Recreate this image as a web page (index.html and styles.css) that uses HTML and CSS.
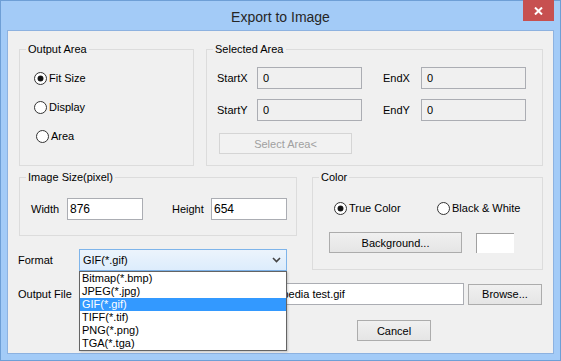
FILE: index.html
```html
<!DOCTYPE html>
<html lang="en">

<head>
    <meta charset="UTF-8">
    <meta name="viewport" content="width=device-width, initial-scale=1.0">
    <title>Export to Image</title>
    <link rel="stylesheet" href="styles.css">
</head>

<body>
    <div class="window">
        <div class="titlebar">
            <span></span>
            <span class="title">Export to Image</span>
            <span class="close">
                <svg width="9" height="8" viewBox="0 0 9 8">
                    <path d="M1 0.5 L8 7.5 M8 0.5 L1 7.5" stroke="#fff" stroke-width="2" fill="none" />
                </svg>
            </span>
        </div>

        <div class="client">
            <!-- 上面两组 -->
            <div class="row-top">
                <fieldset class="group output-area">
                    <legend>Output Area</legend>
                    <div class="output-body">
                        <label class="radio checked"><span class="mark"></span>Fit Size</label>
                        <label class="radio"><span class="mark"></span>Display</label>
                        <label class="radio area"><span class="mark"></span>Area</label>
                    </div>
                </fieldset>

                <fieldset class="group selected-area">
                    <legend>Selected Area</legend>
                    <div class="selected-body">
                        <div class="coords">
                            <span>StartX</span>
                            <input class="field grey" type="text" value="0" readonly>
                            <span class="end-label">EndX</span>
                            <input class="field grey" type="text" value="0" readonly>
                            <span>StartY</span>
                            <input class="field grey" type="text" value="0" readonly>
                            <span class="end-label">EndY</span>
                            <input class="field grey" type="text" value="0" readonly>
                        </div>
                        <button class="btn select-btn" disabled>Select Area&lt;</button>
                    </div>
                </fieldset>
            </div>

            <!-- 中间: 尺寸 / 格式 / 颜色 -->
            <div class="row-mid">
                <div class="left-col">
                    <fieldset class="group image-size">
                        <legend>Image Size(pixel)</legend>
                        <div class="size-body">
                            <span class="w-label">Width</span>
                            <input class="field size" type="text" value="876" readonly>
                            <span class="h-label">Height</span>
                            <input class="field size" type="text" value="654" readonly>
                        </div>
                    </fieldset>

                    <div class="form-row format-row">
                        <span class="label">Format</span>
                        <div class="combo">
                            <span>GIF(*.gif)</span>
                            <svg width="9" height="6" viewBox="0 0 9 6">
                                <path d="M1 1 L4.5 4.5 L8 1" stroke="#444" stroke-width="1.6" fill="none" />
                            </svg>
                            <ul class="dropdown">
                                <li>Bitmap(*.bmp)</li>
                                <li>JPEG(*.jpg)</li>
                                <li class="active">GIF(*.gif)</li>
                                <li>TIFF(*.tif)</li>
                                <li>PNG(*.png)</li>
                                <li>TGA(*.tga)</li>
                            </ul>
                        </div>
                    </div>
                </div>

                <fieldset class="group color">
                    <legend>Color</legend>
                    <div class="color-body">
                        <div class="color-modes">
                            <label class="radio checked true-color"><span class="mark"></span>True Color</label>
                            <label class="radio"><span class="mark"></span>Black &amp; White</label>
                        </div>
                        <div class="bg-row">
                            <button class="btn bg-btn">Background...</button>
                            <span class="swatch"></span>
                        </div>
                    </div>
                </fieldset>
            </div>

            <div class="form-row file-row">
                <span class="label">Output File</span>
                <input class="field file" type="text" value="C:\Users\Softpedia\Desktop\Images\Softpedia test.gif" readonly>
                <button class="btn browse-btn">Browse...</button>
            </div>

            <div class="actions">
                <button class="btn cancel-btn">Cancel</button>
            </div>
        </div>
    </div>
</body>

</html>
```

FILE: styles.css
```css
* {
    margin: 0;
    padding: 0;
    box-sizing: border-box;
}

ul {
    list-style: none;
}

body {
    width: 561px;
    height: 361px;
    overflow: hidden;
    font-family: "Liberation Sans", Arial, sans-serif;
    font-size: 11px;
    color: #000;
}

/* 窗口外框 */
.window {
    width: 561px;
    height: 361px;
    border: 1px solid #6e9fd6;
    background: #a3cbf7;
    padding: 0 6px 6px 6px;
    display: flex;
    flex-direction: column;
}

.titlebar {
    height: 29px;
    display: grid;
    grid-template-columns: 1fr auto 1fr;
    align-items: start;
}

.title {
    font-size: 14px;
    line-height: 16px;
    padding-top: 8px;
    color: #262626;
}

.close {
    justify-self: end;
    width: 31px;
    height: 21px;
    margin-top: -1px;
    background: #c75050;
    display: flex;
    align-items: center;
    justify-content: center;
}

.client {
    flex: 1;
    border: 1px solid #8db2e0;
    background: #f0f0f0;
    padding: 12px 0 0 10px;
}

/* 分组框 */
.group {
    border: 1px solid #dcdcdc;
    min-width: 0;
}

.group legend {
    margin-left: 6px;
    padding: 0 2px;
    line-height: 13px;
}

.row-top {
    display: flex;
    gap: 12px;
    padding-left: 1px;
}

.output-area {
    width: 175px;
    height: 123px;
}

.output-body {
    padding: 16px 0 0 14px;
    display: flex;
    flex-direction: column;
    gap: 16px;
}

.radio {
    display: flex;
    align-items: center;
    gap: 2px;
    height: 13px;
    line-height: 13px;
}

.radio .mark {
    width: 13px;
    height: 13px;
    border: 1px solid #333;
    border-radius: 50%;
    background: #fff;
    display: flex;
    align-items: center;
    justify-content: center;
}

.radio.checked .mark::after {
    content: "";
    width: 5px;
    height: 5px;
    border-radius: 50%;
    background: #111;
    box-shadow: 0 0 0 0.5px #333;
}

.radio.area {
    margin-left: 2px;
}

.selected-area {
    width: 337px;
    height: 123px;
}

.selected-body {
    padding: 11px 0 0 10px;
}

.coords {
    display: grid;
    grid-template-columns: 40px 126px 38px 105px;
    grid-template-rows: 22px 22px;
    row-gap: 10px;
    align-items: center;
}

.field {
    font-family: inherit;
    font-size: 11px;
    height: 22px;
    border: 1px solid #abadb3;
    background: #fff;
    color: #000;
    padding: 0 2px;
    outline: none;
}

.coords .field {
    width: 105px;
}

.field.grey {
    background: #f0f0f0;
    padding-left: 5px;
}

.btn {
    font-family: inherit;
    font-size: 11px;
    color: #000;
    border: 1px solid #acacac;
    background: linear-gradient(#f0f0f0, #e5e5e5);
    height: 21px;
}

.btn:disabled {
    color: #a0a0a0;
    border-color: #d5d5d5;
    background: #f2f2f2;
}

.select-btn {
    width: 133px;
    margin: 12px 0 0 2px;
}

.row-mid {
    display: grid;
    grid-template-columns: 279px 231px;
    column-gap: 15px;
    margin-top: 5px;
    align-items: start;
}

.image-size {
    width: 278px;
    height: 65px;
    margin-left: 1px;
}

.size-body {
    padding: 14px 0 0 11px;
    display: flex;
    align-items: center;
}

.w-label {
    width: 36px;
}

.h-label {
    width: 39px;
    margin-left: 29px;
}

.field.size {
    width: 76px;
    font-size: 12px;
}

.form-row {
    display: flex;
    align-items: center;
}

.form-row .label {
    width: 61px;
}

.format-row {
    margin-top: 13px;
}

/* 下拉框 */
.combo {
    position: relative;
    width: 208px;
    height: 22px;
    border: 1px solid #7eb4ea;
    background: linear-gradient(#ecf4fc, #dcecfc);
    padding: 0 5px 0 3px;
    display: flex;
    align-items: center;
    justify-content: space-between;
}

.dropdown {
    position: absolute;
    top: calc(100% + 1px);
    left: -1px;
    width: 208px;
    height: 80px;
    border: 1px solid #646464;
    background: #fff;
    box-shadow: 1px 1px 2px rgba(0, 0, 0, 0.18);
    z-index: 10;
}

.dropdown li {
    height: 13px;
    line-height: 13px;
    padding-left: 2px;
}

.dropdown .active {
    background: #3399ff;
    color: #fff;
}

.color {
    width: 231px;
    height: 99px;
}

.color-body {
    padding: 18px 0 0 16px;
}

.color-modes {
    display: flex;
    margin-left: 5px;
}

.true-color {
    width: 103px;
}

.bg-row {
    display: flex;
    align-items: flex-start;
    gap: 14px;
    margin-top: 17px;
}

.bg-btn {
    width: 133px;
}

.swatch {
    width: 38px;
    height: 20px;
    margin-top: 1px;
    background: #fff;
    border-top: 1px solid #a0a0a0;
    border-left: 1px solid #a0a0a0;
}

.file-row {
    margin-top: 12px;
}

.field.file {
    width: 385px;
    padding-left: 5px;
}

.browse-btn {
    width: 74px;
    margin-left: 4px;
}

.actions {
    margin-top: 15px;
}

.cancel-btn {
    width: 74px;
    margin-left: 339px;
}
```
